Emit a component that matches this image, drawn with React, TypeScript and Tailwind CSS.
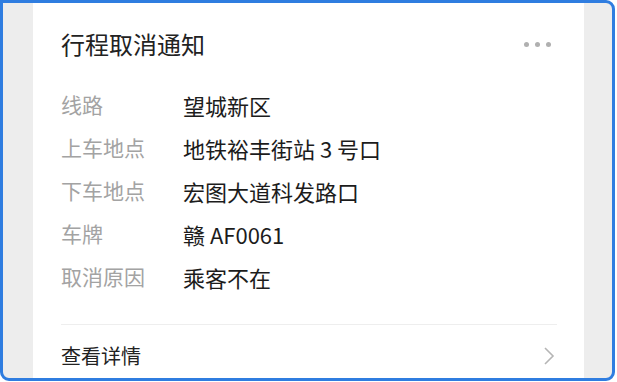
import React from "react";

const rows: [string, React.ReactNode][] = [
  ["线路", "望城新区"],
  ["上车地点", "地铁裕丰街站 3 号口"],
  ["下车地点", "宏图大道科发路口"],
  ["车牌", "赣 AF0061"],
  ["取消原因", "乘客不在"],
];

export default function App() {
  return (
    <div
      className="w-[615px] h-[381px] border-[3px] border-[#2f7de0] rounded-[9px] rounded-tl-none bg-[#ededed] overflow-hidden"
      style={{ fontFamily: '"Noto Sans CJK SC", "Noto Sans", sans-serif' }}
    >
      <div className="ml-[30px] w-[551px] h-full bg-white pl-[28px] pr-[27px] flex flex-col">
        <div className="mt-[21px] h-[40px] shrink-0 flex items-center justify-between">
          <span className="text-[24px] leading-none text-[#222222]">行程取消通知</span>
          <div className="flex items-center gap-[6px] mr-[6px]">
            <span className="w-[5px] h-[5px] rounded-full bg-[#b0b0b0]" />
            <span className="w-[5px] h-[5px] rounded-full bg-[#b0b0b0]" />
            <span className="w-[5px] h-[5px] rounded-full bg-[#b0b0b0]" />
          </div>
        </div>
        <div className="mt-[19px] shrink-0 flex flex-col">
          {rows.map(([k, v]) => (
            <div key={k} className="h-[43px] shrink-0 flex items-center">
              <span className="w-[122px] text-[21px] leading-none text-[#a3a3a3]">{k}</span>
              <span className="text-[22px] leading-none text-[#1c1c1c]">{v}</span>
            </div>
          ))}
        </div>
        <div className="mt-[26px] h-px shrink-0 bg-[#eeeeee]" />
        <div className="h-[62px] shrink-0 flex items-center justify-between">
          <span className="text-[20px] leading-none text-[#222222]">查看详情</span>
          <svg width="12" height="20" viewBox="0 0 12 20" className="mr-[2px]">
            <path d="M2 2 L10 10 L2 18" fill="none" stroke="#b5b5b5" strokeWidth="1.6" />
          </svg>
        </div>
      </div>
    </div>
  );
}
